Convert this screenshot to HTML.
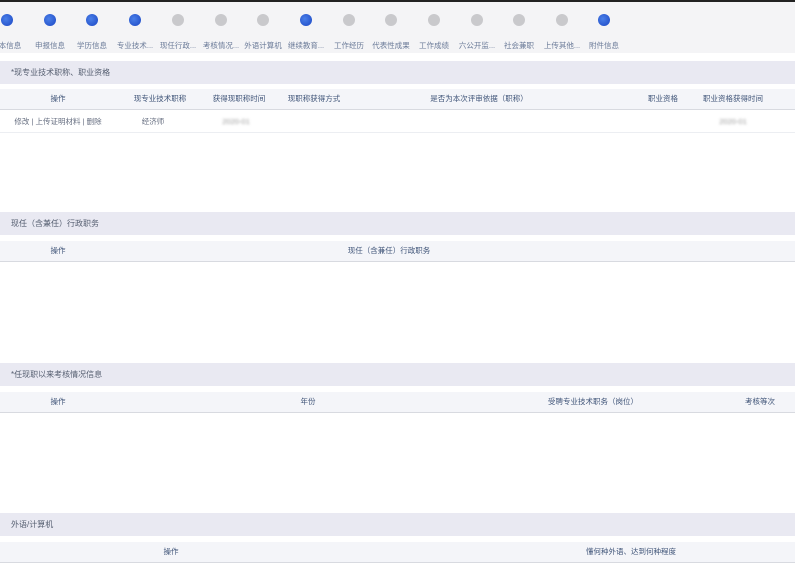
<!DOCTYPE html>
<html><head><meta charset="utf-8"><style>
*{margin:0;padding:0;box-sizing:border-box}
body{width:795px;height:568px;overflow:hidden;background:#fff;position:relative;font-family:"Liberation Sans","Noto Sans CJK SC",sans-serif;font-size:8px;color:#4a5a78}
.top{position:absolute;left:0;top:0;width:795px;height:53px;background:#f4f4f6;border-top:2px solid #222}
.step{position:absolute;top:0;width:43px;text-align:center}
.dot{position:absolute;top:12px;width:12px;height:12px;border-radius:50%;background:#c9c9cc}
.dot.b{background:radial-gradient(circle at 40% 40%,#4a7fe8,#1b47c4)}
.lbl{position:absolute;top:38px;white-space:nowrap;font-size:7.5px;color:#6a7a98;transform:translateX(-50%)}
.bar{position:absolute;left:0;width:795px;height:23px;background:#e9e9f2;padding-left:11px;line-height:23px;font-size:8px;color:#555e70}
.hd{position:absolute;left:0;width:795px;height:21px;background:#f4f5f9;border-bottom:1px solid #d8dae0}
.hd span,.row span{position:absolute;top:0;line-height:20px;white-space:nowrap;transform:translateX(-50%);color:#3f5478;font-size:7.5px}
.row{position:absolute;left:0;width:795px;height:22px;border-bottom:1px solid #eceef2}
.row span{color:#666e80;line-height:22px}
.blur{filter:blur(1.2px);color:#999!important}
</style></head><body>
<div class="top">
<div class="dot b" style="left:1px"></div>
<div class="dot b" style="left:44px"></div>
<div class="dot b" style="left:86px"></div>
<div class="dot b" style="left:129px"></div>
<div class="dot" style="left:172px"></div>
<div class="dot" style="left:215px"></div>
<div class="dot" style="left:257px"></div>
<div class="dot b" style="left:300px"></div>
<div class="dot" style="left:343px"></div>
<div class="dot" style="left:385px"></div>
<div class="dot" style="left:428px"></div>
<div class="dot" style="left:471px"></div>
<div class="dot" style="left:513px"></div>
<div class="dot" style="left:556px"></div>
<div class="dot b" style="left:598px"></div>
<div class="lbl" style="left:10px">本信息</div>
<div class="lbl" style="left:50px">申报信息</div>
<div class="lbl" style="left:92px">学历信息</div>
<div class="lbl" style="left:135px">专业技术...</div>
<div class="lbl" style="left:178px">现任行政...</div>
<div class="lbl" style="left:221px">考核情况...</div>
<div class="lbl" style="left:263px">外语计算机</div>
<div class="lbl" style="left:306px">继续教育...</div>
<div class="lbl" style="left:349px">工作经历</div>
<div class="lbl" style="left:391px">代表性成果</div>
<div class="lbl" style="left:434px">工作成绩</div>
<div class="lbl" style="left:477px">六公开监...</div>
<div class="lbl" style="left:519px">社会兼职</div>
<div class="lbl" style="left:562px">上传其他...</div>
<div class="lbl" style="left:604px">附件信息</div>
</div>

<div class="bar" style="top:61px">*现专业技术职称、职业资格</div>
<div class="hd" style="top:89px"><span style="left:58px">操作</span><span style="left:160px">现专业技术职称</span><span style="left:239px">获得现职称时间</span><span style="left:314px">现职称获得方式</span><span style="left:479px">是否为本次评审依据（职称）</span><span style="left:663px">职业资格</span><span style="left:733px">职业资格获得时间</span></div>
<div class="row" style="top:111px"><span style="left:58px">修改 | 上传证明材料 | 删除</span><span style="left:153px">经济师</span><span class="blur" style="left:236px">2020-01</span><span class="blur" style="left:733px">2020-01</span></div>

<div class="bar" style="top:212px">现任（含兼任）行政职务</div>
<div class="hd" style="top:241px"><span style="left:58px">操作</span><span style="left:389px">现任（含兼任）行政职务</span></div>

<div class="bar" style="top:363px">*任现职以来考核情况信息</div>
<div class="hd" style="top:392px"><span style="left:58px">操作</span><span style="left:308px">年份</span><span style="left:593px">受聘专业技术职务（岗位）</span><span style="left:760px">考核等次</span></div>

<div class="bar" style="top:513px">外语/计算机</div>
<div class="hd" style="top:542px"><span style="left:171px">操作</span><span style="left:631px">懂何种外语、达到何种程度</span></div>
</body></html>
